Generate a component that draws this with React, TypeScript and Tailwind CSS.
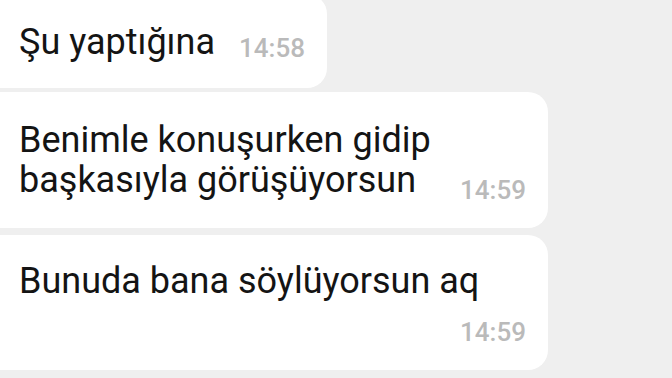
import React from "react";

const font = { fontFamily: "Roboto, 'Noto Sans', sans-serif" };

export default function App() {
  return (
    <div
      className="w-[672px] h-[378px] overflow-hidden bg-[#efefef] flex flex-col items-start"
      style={font}
    >
      <div className="-mt-[6px] bg-white rounded-r-[20px] pl-[19px] pr-[22px] pt-[28px] pb-[26px] flex items-end">
        <div className="text-[36px] leading-[40px] text-[#141414]">Şu yaptığına</div>
        <div className="ml-[24px] mb-[1px] text-[26px] leading-[25px] font-medium text-[#bababa]">14:58</div>
      </div>

      <div className="mt-[4px] w-[548px] bg-white rounded-r-[20px] pl-[19px] pr-[22px] pt-[28px] pb-[25px] flex items-end justify-between">
        <div className="mb-[3px] text-[36px] leading-[40px] text-[#141414]">
          <div>Benimle konuşurken gidip</div>
          <div>başkasıyla görüşüyorsun</div>
        </div>
        <div className="text-[26px] leading-[25px] font-medium text-[#bababa]">14:59</div>
      </div>

      <div className="mt-[7px] w-[548px] bg-white rounded-r-[20px] pl-[19px] pr-[22px] pt-[26px] pb-[25px] flex flex-col">
        <div className="text-[36px] leading-[40px] text-[#141414]">Bunuda bana söylüyorsun aq</div>
        <div className="mt-[19px] self-end text-[26px] leading-[25px] font-medium text-[#bababa]">14:59</div>
      </div>
    </div>
  );
}
